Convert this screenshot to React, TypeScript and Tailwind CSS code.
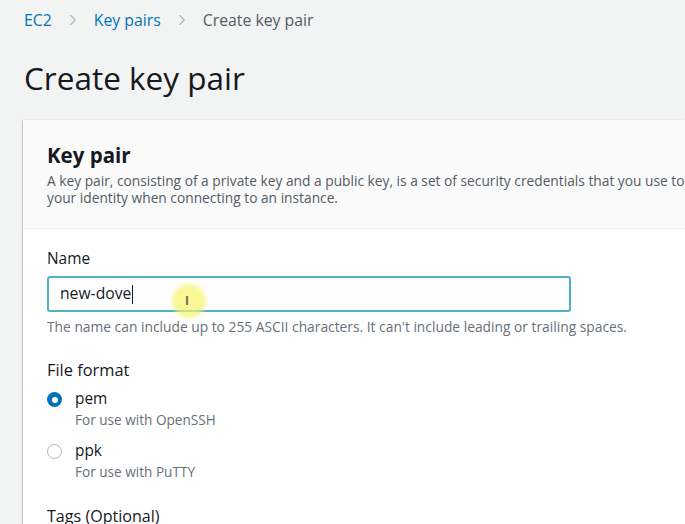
import { ChevronRight } from 'lucide-react';

const font = { fontFamily: '"Open Sans", "Noto Sans", sans-serif' };

function Radio({ checked, label, hint }: { checked: boolean; label: string; hint: string }) {
  return (
    <div className="flex items-start gap-[13px]">
      <span
        className={`mt-[4px] flex h-[15px] w-[15px] shrink-0 items-center justify-center rounded-full ${
          checked ? 'bg-[#0073bb]' : 'border-[1.5px] border-[#aab7b8] bg-white'
        }`}
      >
        {checked && <span className="h-[6px] w-[6px] rounded-full bg-white" />}
      </span>
      <div>
        <p className="text-[15.4px] leading-[22px] text-[#16191f]">{label}</p>
        <p className="text-[13.6px] leading-[19px] text-[#687078]">{hint}</p>
      </div>
    </div>
  );
}

export default function App() {
  return (
    <div className="h-[524px] w-[685px] overflow-hidden bg-[#f2f3f3]" style={font}>
      <nav className="flex items-center gap-[12px] px-[24px] pt-[10px] text-[15.8px] leading-[20px]">
        <span className="text-[#0073bb]">EC2</span>
        <ChevronRight size={18} strokeWidth={1.5} className="text-[#aab7b8]" />
        <span className="text-[#0073bb]">Key pairs</span>
        <ChevronRight size={18} strokeWidth={1.5} className="text-[#aab7b8]" />
        <span className="text-[#545b64]">Create key pair</span>
      </nav>

      <h1 className="mt-[38px] px-[24px] text-[31.5px] leading-[20px] text-[#16191f]">Create key pair</h1>

      <section className="ml-[23px] mt-[32px] bg-white shadow-[0_1px_2px_rgba(0,28,36,0.3),-1px_0_1px_rgba(0,28,36,0.1)]">
        <div className="border-b border-[#eaeded] bg-[#fafafa] px-[24px] pb-[22px] pt-[22px]">
          <h2 className="text-[20.5px] font-bold leading-[26px] text-[#16191f]">Key pair</h2>
          <p className="mt-[4px] whitespace-nowrap text-[13.75px] leading-[17px] text-[#545b64]">
            A key pair, consisting of a private key and a public key, is a set of security credentials that you use to prove
          </p>
          <p className="text-[13.75px] leading-[17px] text-[#545b64]">your identity when connecting to an instance.</p>
        </div>

        <div className="px-[24px] pt-[19px]">
          <label className="block text-[15.4px] leading-[22px] text-[#16191f]">Name</label>
          <div className="relative mt-[6px] w-[524px]">
            <div className="flex h-[36px] items-center rounded-[3px] border-2 border-[#4fb0c6] px-[11px] text-[15.7px] text-[#16191f]">
              new-dove
              <span className="ml-px h-[19px] w-px bg-[#16191f]" />
            </div>
            <span className="absolute left-[125px] top-[8px] h-[34px] w-[34px] rounded-full bg-[#f7f36a]/70 blur-[2px]" />
            <span className="absolute left-[138px] top-[19px] text-[12px] font-bold leading-none text-[#6b6b3a]">I</span>
          </div>
          <p className="mt-[6px] text-[13.8px] leading-[17px] text-[#687078]">
            The name can include up to 255 ASCII characters. It can't include leading or trailing spaces.
          </p>

          <p className="mt-[24px] text-[16.4px] leading-[22px] text-[#16191f]">File format</p>
          <div className="mt-[7px] space-y-[11px]">
            <Radio checked label="pem" hint="For use with OpenSSH" />
            <Radio checked={false} label="ppk" hint="For use with PuTTY" />
          </div>

          <p className="mt-[24px] text-[16.1px] leading-[22px] text-[#16191f]">Tags (Optional)</p>
        </div>
      </section>
    </div>
  );
}
